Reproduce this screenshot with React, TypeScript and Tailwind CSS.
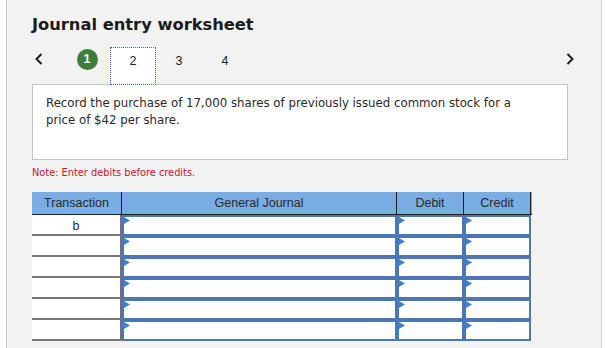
import React from 'react';

const ROWS = ['b', '', '', '', '', ''];

function Flag() {
  return (
    <svg width="6" height="7" viewBox="0 0 6 7" className="absolute left-0 top-0">
      <path d="M0 0 L6 3.5 L0 7 Z" fill="#3d7fd3" />
    </svg>
  );
}

function InputCell({ className }: { className: string }) {
  return (
    <div className={`relative h-full border-2 border-[#4a78b6] bg-white ${className}`}>
      <Flag />
    </div>
  );
}

function Chevron({ dir }: { dir: 'left' | 'right' }) {
  return (
    <svg width="8" height="12" viewBox="0 0 8 12">
      <polyline
        points={dir === 'left' ? '6.5,1 1.5,6 6.5,11' : '1.5,1 6.5,6 1.5,11'}
        fill="none"
        stroke="#1e1e1e"
        strokeWidth="2"
      />
    </svg>
  );
}

export default function App() {
  return (
    <div className="w-[606px] h-[348px] bg-white overflow-hidden">
      <div className="ml-[6px] w-[596px] h-[348px] bg-[#f2f2f2] border-x border-[#cfcfcf] pl-[25px]">
        {/* title */}
        <div className="pt-[15px] h-[35px] text-[16.3px] leading-[20px] font-bold text-[#1a1a1a] font-['DejaVu_Sans',sans-serif]">
          Journal entry worksheet
        </div>

        {/* step tabs */}
        <div className="mt-[12px] flex items-start h-[37px] font-['Liberation_Sans',Arial,sans-serif] text-[12.5px] text-[#222]">
          <div className="w-[32px] h-[24px] flex items-center pl-[3px]">
            <Chevron dir="left" />
          </div>
          <div className="w-[46px] h-[37px] flex justify-center pt-[2px]">
            <div className="w-[21px] h-[21px] rounded-full bg-[#3f7d3b] text-white font-bold flex items-center justify-center">
              1
            </div>
          </div>
          <div className="w-[46px] h-[38px] bg-white border border-dotted border-[#2f66c2] flex justify-center pt-[4px]">
            2
          </div>
          <div className="w-[46px] h-[37px] flex justify-center pt-[5px]">3</div>
          <div className="w-[46px] h-[37px] flex justify-center pt-[5px]">4</div>
          <div className="flex-1" />
          <div className="h-[24px] flex items-center mr-[27px]">
            <Chevron dir="right" />
          </div>
        </div>

        {/* question */}
        <div className="w-[536px] h-[76px] bg-white border border-[#c4c4c4] pl-[13px] pt-[10px] text-[11.75px] leading-[17px] text-[#2a2a2a] font-['DejaVu_Sans',sans-serif]">
          <p className="w-[490px]">
            Record the purchase of 17,000 shares of previously issued common stock for a price of $42 per share.
          </p>
        </div>

        <div className="mt-[7px] text-[9.8px] leading-[12px] text-[#c8161e] font-['DejaVu_Sans',sans-serif]">
          Note: Enter debits before credits.
        </div>

        {/* table */}
        <div className="mt-[13px] w-[500px] font-['Liberation_Sans',Arial,sans-serif] text-[12.5px] text-[#2a2a2a]">
          <div className="flex h-[23px] bg-[#79ade4] border-b border-[#1e1e1e]">
            <div className="w-[90px] flex items-center justify-center border-r border-[#1e1e1e]">Transaction</div>
            <div className="w-[275px] flex items-center justify-center border-r border-[#1e1e1e]">General Journal</div>
            <div className="w-[67px] flex items-center justify-center border-r border-[#1e1e1e]">Debit</div>
            <div className="w-[67px] flex items-center justify-center border-r border-[#1e1e1e]">Credit</div>
          </div>
          {ROWS.map((t, i) => (
            <div key={i} className="flex h-[21px]">
              <div className="w-[90px] bg-white border-b-2 border-[#777] border-r-2 border-r-[#707070] flex items-center justify-center leading-none pt-[4px]">
                {t}
              </div>
              <InputCell className="w-[275px]" />
              <InputCell className="w-[67px]" />
              <InputCell className="w-[67px]" />
            </div>
          ))}
        </div>
      </div>
    </div>
  );
}
